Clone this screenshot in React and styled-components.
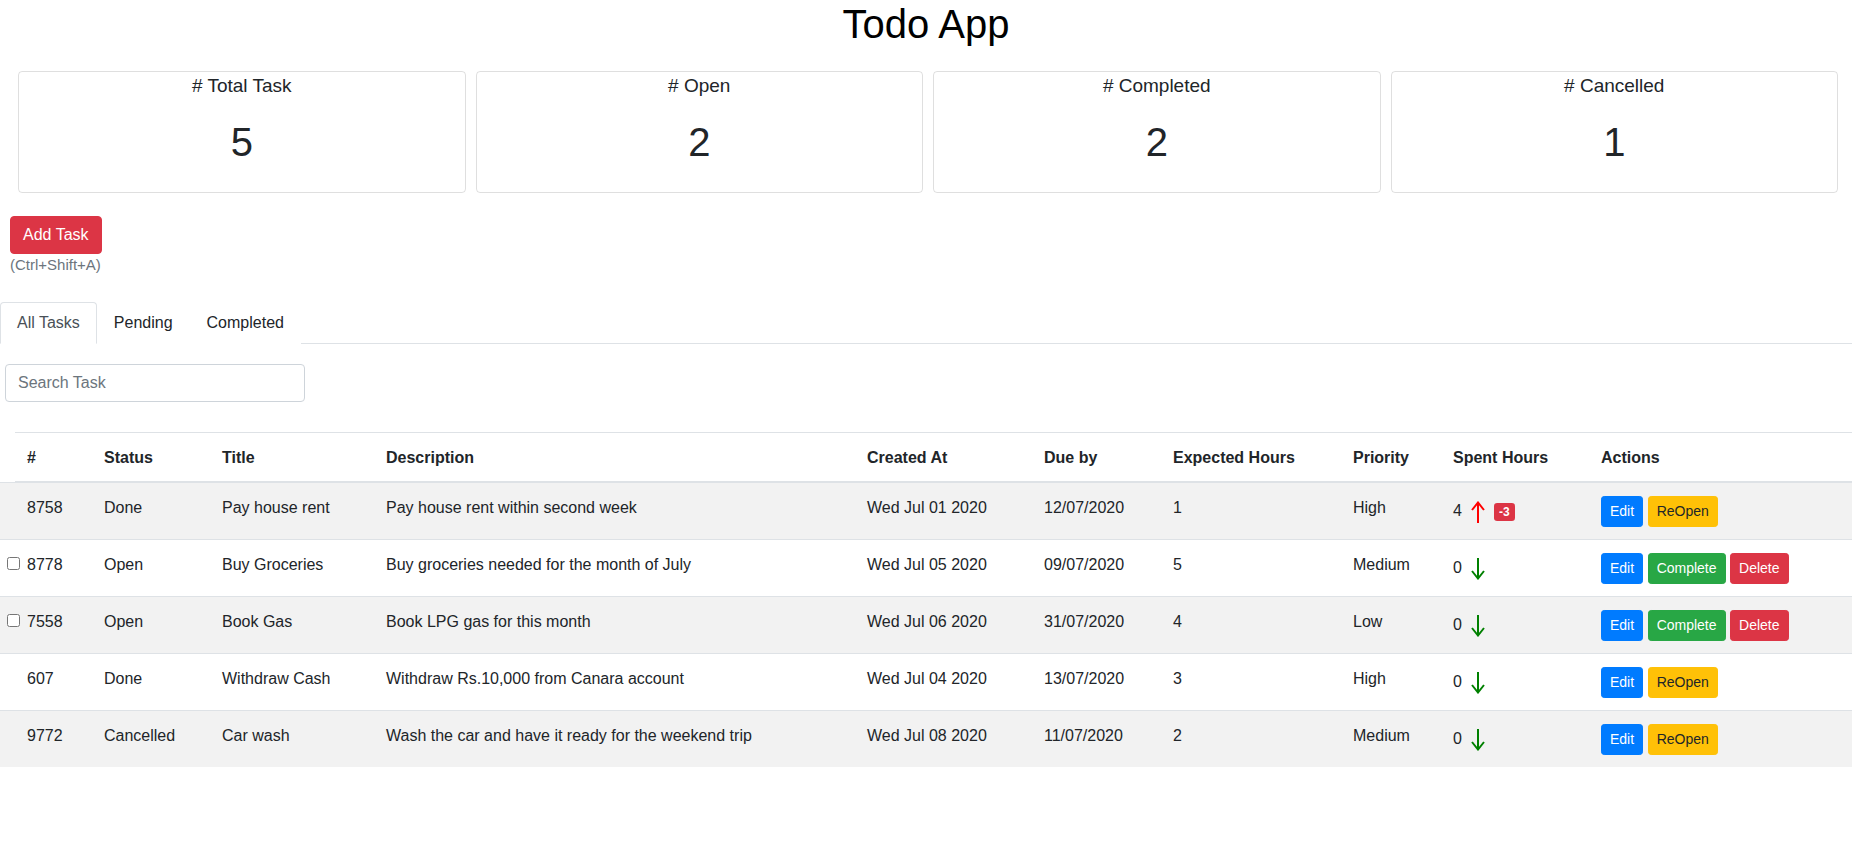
import React from 'react';
import styled, { createGlobalStyle } from 'styled-components';

const GlobalStyle = createGlobalStyle`
  * { box-sizing: border-box; }
  body {
    margin: 0;
    font-family: "Liberation Sans", Arial, sans-serif;
    font-size: 16px;
    line-height: 1.5;
    color: #212529;
    background: #fff;
  }
`;

const Title = styled.h1`
  margin: 0;
  font-size: 40px;
  line-height: 48px;
  font-weight: 400;
  color: #000;
  text-align: center;
`;

const StatsRow = styled.div`
  display: flex;
  gap: 10px;
  margin-top: 23px;
  padding: 0 14px 0 18px;
`;

const StatCard = styled.div`
  flex: 1;
  height: 122px;
  border: 1px solid rgba(0, 0, 0, 0.125);
  border-radius: 4px;
  text-align: center;
`;

const StatLabel = styled.div`
  font-size: 19px;
  line-height: 28px;
`;

const StatValue = styled.div`
  margin-top: 18px;
  font-size: 40px;
  line-height: 48px;
`;

const Toolbar = styled.div`
  margin-top: 23px;
  padding-left: 10px;
`;

const Button = styled.button`
  display: inline-block;
  font-family: inherit;
  font-size: ${p => (p.$sm ? '14px' : '16px')};
  line-height: ${p => (p.$sm ? '21px' : '24px')};
  padding: ${p => (p.$sm ? '4px 8px' : '6px 12px')};
  border-radius: ${p => (p.$sm ? '3.2px' : '4px')};
  border: 1px solid ${p => p.$bg};
  background: ${p => p.$bg};
  color: ${p => p.$fg || '#fff'};
  cursor: pointer;
`;

const Shortcut = styled.div`
  font-size: 15px;
  line-height: 22px;
  color: #6c757d;
`;

const TabBar = styled.div`
  display: flex;
  margin-top: 26px;
  border-bottom: 1px solid #dee2e6;
`;

const Tab = styled.div`
  padding: 8px 16px;
  margin-bottom: -1px;
  border: 1px solid transparent;
  border-radius: 4px 4px 0 0;
  color: ${p => (p.$active ? '#495057' : '#212529')};
  background: #fff;
  border-color: ${p => (p.$active ? '#dee2e6 #dee2e6 #fff' : 'transparent')};
  cursor: pointer;
`;

const Search = styled.input`
  display: block;
  margin: 20px 0 0 5px;
  width: 300px;
  height: 38px;
  padding: 6px 12px;
  font-family: inherit;
  font-size: 16px;
  color: #495057;
  border: 1px solid #ced4da;
  border-radius: 4px;
  &::placeholder { color: #6c757d; }
`;

const Table = styled.table`
  width: 100%;
  margin-top: 30px;
  border-collapse: collapse;
  table-layout: fixed;

  tbody tr:nth-of-type(odd) { background: rgba(0, 0, 0, 0.05); }
`;

const Th = styled.th`
  width: ${p => p.$w}px;
  padding: ${p => (p.$blank ? '0' : '13px 12px 11px')};
  text-align: left;
  vertical-align: bottom;
  font-weight: 700;
  border-top: ${p => (p.$blank ? 'none' : '1px solid #dee2e6')};
  border-bottom: ${p => (p.$blank ? 'none' : '2px solid #dee2e6')};
`;

const Td = styled.td`
  height: 57px;
  padding: ${p => (p.$blank ? '0' : '13px 12px 11px')};
  vertical-align: top;
  border-top: 1px solid #dee2e6;
  white-space: nowrap;
`;

const Check = styled.input`
  display: block;
  width: 13px;
  height: 13px;
  margin: 17px 0 0 7px;
`;

const Spent = styled.div`
  display: flex;
  align-items: center;
  gap: 9px;
  height: 22px;
  margin-top: 5px;
`;

const SpentNum = styled.span`
  line-height: 1;
  margin-bottom: 2px;
`;

const Badge = styled.span`
  display: inline-block;
  padding: 3px 5px;
  font-size: 12px;
  line-height: 12px;
  font-weight: 700;
  color: #fff;
  background: #dc3545;
  border-radius: 3.2px;
`;

const Actions = styled.div`
  display: flex;
  gap: 4.5px;
  margin-top: 0;
`;

const Arrow = ({ up, color }) => (
  <svg width="14" height="22" viewBox="0 0 14 22" fill="none" stroke={color} strokeWidth="2">
    {up ? (
      <path d="M7 2V22M1 9L7 1.5L13 9" />
    ) : (
      <path d="M7 0V20M1 13L7 20.5L13 13" />
    )}
  </svg>
);

const stats = [
  ['# Total Task', 5],
  ['# Open', 2],
  ['# Completed', 2],
  ['# Cancelled', 1],
];

const cols = [
  ['', 15], ['#', 77], ['Status', 118], ['Title', 164], ['Description', 481],
  ['Created At', 177], ['Due by', 129], ['Expected Hours', 180], ['Priority', 100],
  ['Spent Hours', 148], ['Actions', 263],
];

const tasks = [
  { id: 8758, status: 'Done', title: 'Pay house rent', desc: 'Pay house rent within second week', created: 'Wed Jul 01 2020', due: '12/07/2020', exp: 1, priority: 'High', spent: 4, over: -3 },
  { id: 8778, status: 'Open', title: 'Buy Groceries', desc: 'Buy groceries needed for the month of July', created: 'Wed Jul 05 2020', due: '09/07/2020', exp: 5, priority: 'Medium', spent: 0 },
  { id: 7558, status: 'Open', title: 'Book Gas', desc: 'Book LPG gas for this month', created: 'Wed Jul 06 2020', due: '31/07/2020', exp: 4, priority: 'Low', spent: 0 },
  { id: 607, status: 'Done', title: 'Withdraw Cash', desc: 'Withdraw Rs.10,000 from Canara account', created: 'Wed Jul 04 2020', due: '13/07/2020', exp: 3, priority: 'High', spent: 0 },
  { id: 9772, status: 'Cancelled', title: 'Car wash', desc: 'Wash the car and have it ready for the weekend trip', created: 'Wed Jul 08 2020', due: '11/07/2020', exp: 2, priority: 'Medium', spent: 0 },
];

const App = () => {
  return (
    <>
      <GlobalStyle />
      <Title>Todo App</Title>
      <StatsRow>
        {stats.map(([label, value]) => (
          <StatCard key={label}>
            <StatLabel>{label}</StatLabel>
            <StatValue>{value}</StatValue>
          </StatCard>
        ))}
      </StatsRow>
      <Toolbar>
        <Button $bg="#dc3545">Add Task</Button>
        <Shortcut>(Ctrl+Shift+A)</Shortcut>
      </Toolbar>
      <TabBar>
        <Tab $active>All Tasks</Tab>
        <Tab>Pending</Tab>
        <Tab>Completed</Tab>
      </TabBar>
      <Search placeholder="Search Task" />
      <Table>
        <thead>
          <tr>
            {cols.map(([name, w], i) => (
              <Th key={i} $w={w} $blank={i === 0}>{name}</Th>
            ))}
          </tr>
        </thead>
        <tbody>
          {tasks.map(t => {
            const open = t.status === 'Open';
            return (
              <tr key={t.id}>
                <Td $blank>{open && <Check type="checkbox" />}</Td>
                <Td>{t.id}</Td>
                <Td>{t.status}</Td>
                <Td>{t.title}</Td>
                <Td>{t.desc}</Td>
                <Td>{t.created}</Td>
                <Td>{t.due}</Td>
                <Td>{t.exp}</Td>
                <Td>{t.priority}</Td>
                <Td>
                  <Spent>
                    <SpentNum>{t.spent}</SpentNum>
                    {t.spent > t.exp ? <Arrow up color="#ff0000" /> : <Arrow color="#008000" />}
                    {t.over !== undefined && <Badge>{t.over}</Badge>}
                  </Spent>
                </Td>
                <Td>
                  <Actions>
                    <Button $sm $bg="#007bff">Edit</Button>
                    {open ? (
                      <>
                        <Button $sm $bg="#28a745">Complete</Button>
                        <Button $sm $bg="#dc3545">Delete</Button>
                      </>
                    ) : (
                      <Button $sm $bg="#ffc107" $fg="#212529">ReOpen</Button>
                    )}
                  </Actions>
                </Td>
              </tr>
            );
          })}
        </tbody>
      </Table>
    </>
  );
};

export default App;
